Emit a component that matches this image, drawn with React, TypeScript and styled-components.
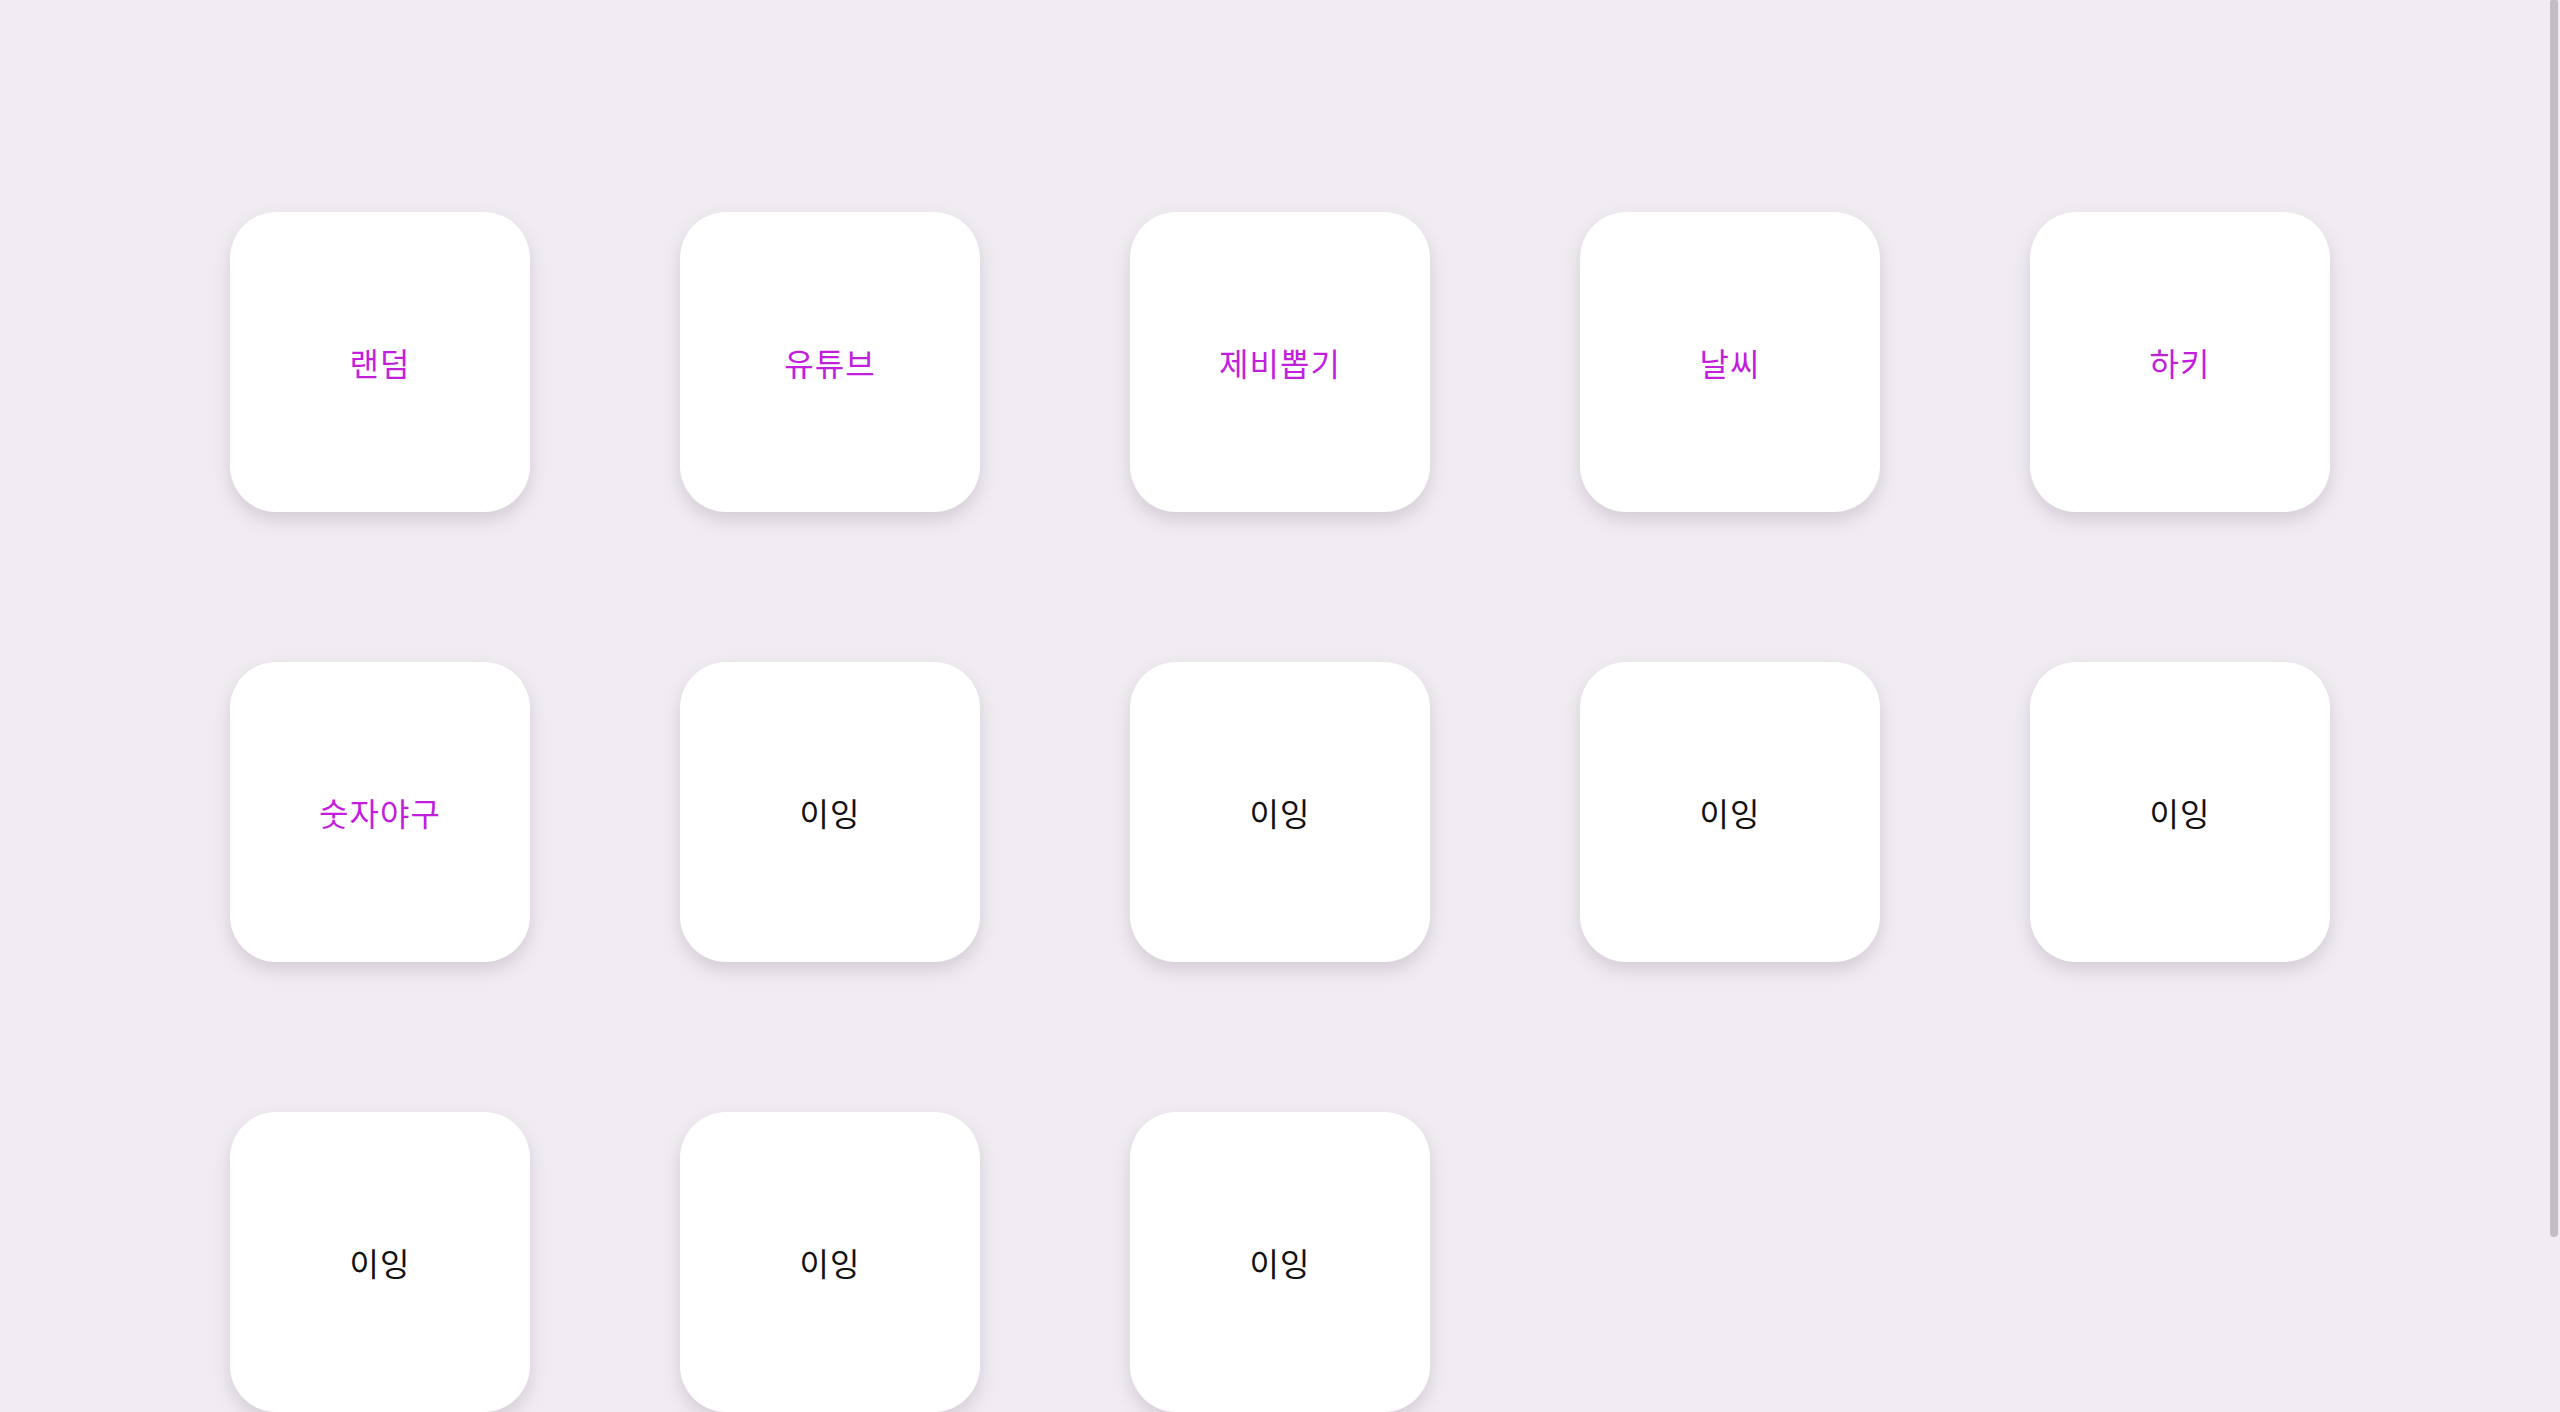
import styled, { createGlobalStyle } from "styled-components";

const GlobalStyle = createGlobalStyle`
    html, body {
        margin: 0;
        padding: 0;
        background: #f1ecf2;
    }
    body {
        font-family: "Noto Sans CJK KR", "Noto Sans", sans-serif;
    }
`;

const Container = styled.div`
    padding: 212px 0px 200px 230px;
`;

const Grid = styled.div`
    display: grid;
    grid-template-columns: repeat(5, 300px);
    gap: 150px;
`;

const Card = styled.div`
    width: 300px;
    height: 300px;
    background: #ffffff;
    border-radius: 46px;
    box-shadow: 0px 8px 18px rgba(60, 40, 70, 0.16);
    display: flex;
    justify-content: center;
    align-items: center;
`;

const Label = styled.span<{ $active: boolean }>`
    font-size: 32px;
    letter-spacing: 1px;
    color: ${(props) => (props.$active ? "#c21fdd" : "#111111")};
`;

// thin overlay scroll thumb, as seen on the right edge
const ScrollThumb = styled.div`
    position: fixed;
    top: 0px;
    right: 2px;
    width: 8px;
    height: 1237px;
    background: #c3bdc4;
    border-radius: 2px 2px 4px 4px;
`;

const menus = [
    { name: "랜덤", active: true },
    { name: "유튜브", active: true },
    { name: "제비뽑기", active: true },
    { name: "날씨", active: true },
    { name: "하키", active: true },
    { name: "숫자야구", active: true },
    { name: "이잉", active: false },
    { name: "이잉", active: false },
    { name: "이잉", active: false },
    { name: "이잉", active: false },
    { name: "이잉", active: false },
    { name: "이잉", active: false },
    { name: "이잉", active: false },
];

function App() {
    return (
        <>
            <GlobalStyle />
            <Container>
                <Grid>
                    {menus.map((menu, i) => (
                        <Card key={i}>
                            <Label $active={menu.active}>{menu.name}</Label>
                        </Card>
                    ))}
                </Grid>
            </Container>
            <ScrollThumb />
        </>
    );
}

export default App;
